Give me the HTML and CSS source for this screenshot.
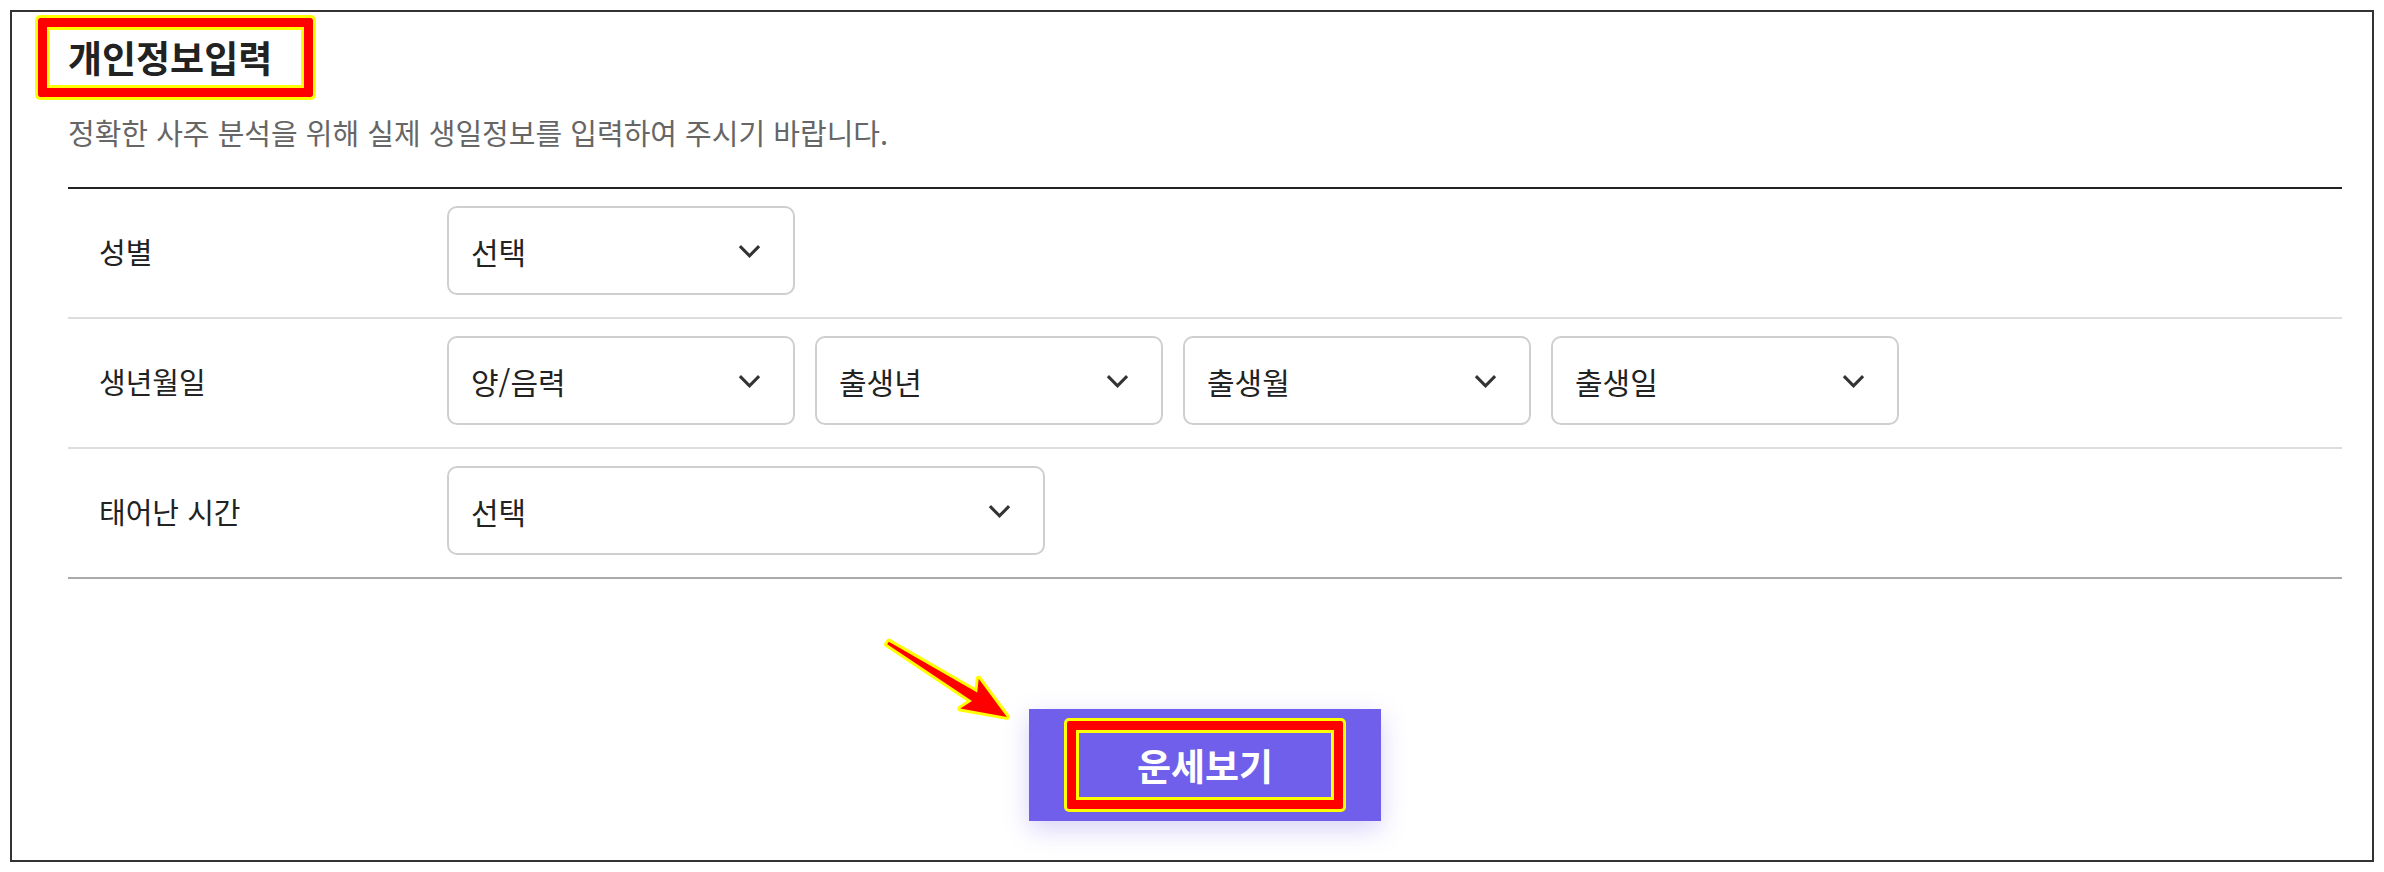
FILE: index.html
```html
<!DOCTYPE html>
<html lang="ko">
<head>
<meta charset="utf-8">
<title>개인정보입력</title>
<link rel="stylesheet" href="styles.css">
</head>
<body>
<div class="card">
  <header class="intro">
    <h1 class="title">개인정보입력</h1>
    <p class="desc">정확한 사주 분석을 위해 실제 생일정보를 입력하여 주시기 바랍니다.</p>
  </header>

  <div class="form">
    <div class="row">
      <div class="label">성별</div>
      <div class="fields">
        <div class="select"><span>선택</span><svg class="chev" viewBox="0 0 24 14"><path d="M2 2 L12 12 L22 2"/></svg></div>
      </div>
    </div>
    <div class="row">
      <div class="label">생년월일</div>
      <div class="fields">
        <div class="select"><span>양/음력</span><svg class="chev" viewBox="0 0 24 14"><path d="M2 2 L12 12 L22 2"/></svg></div>
        <div class="select"><span>출생년</span><svg class="chev" viewBox="0 0 24 14"><path d="M2 2 L12 12 L22 2"/></svg></div>
        <div class="select"><span>출생월</span><svg class="chev" viewBox="0 0 24 14"><path d="M2 2 L12 12 L22 2"/></svg></div>
        <div class="select"><span>출생일</span><svg class="chev" viewBox="0 0 24 14"><path d="M2 2 L12 12 L22 2"/></svg></div>
      </div>
    </div>
    <div class="row last">
      <div class="label">태어난 시간</div>
      <div class="fields">
        <div class="select wide"><span>선택</span><svg class="chev" viewBox="0 0 24 14"><path d="M2 2 L12 12 L22 2"/></svg></div>
      </div>
    </div>
  </div>

  <div class="actions">
    <button class="submit" type="button"><span class="mark">운세보기</span></button>
  </div>

  <svg class="arrow" viewBox="0 0 145 100" width="145" height="100">
    <polygon points="13.8,11.7 102.2,62.6 103.7,48.8 131.9,86.9 85.3,78.6 97.0,71.1 12.2,14.3"
      fill="#ff0000" stroke="#ffff00" stroke-width="6" stroke-linejoin="round" paint-order="stroke"/>
  </svg>
</div>
</body>
</html>
```

FILE: styles.css
```css
* {
  box-sizing: border-box;
}

html, body {
  margin: 0;
  padding: 0;
  background: #ffffff;
}

body {
  font-family: "Noto Sans CJK KR", "Noto Sans", sans-serif;
  color: #222222;
}

.card {
  position: relative;
  margin: 10px;
  height: 852px;
  border: 2px solid #333333;
  padding: 0 30px 0 56px;
  background: #ffffff;
}

.intro {
  display: flex;
  flex-direction: column;
  align-items: flex-start;
}

.title {
  margin: 6px 0 0 -30px;
  width: 275px;
  height: 79px;
  display: flex;
  align-items: center;
  padding-left: 21px;
  border: 9px solid #ff0000;
  border-radius: 2px;
  outline: 3px solid #ffff00;
  box-shadow: inset 0 0 0 3px #ffff00;
  font-size: 37px;
  font-weight: 700;
  color: #222222;
  line-height: 1;
  white-space: nowrap;
}

.desc {
  margin: 15px 0 0;
  font-size: 29px;
  line-height: 40px;
  color: #666666;
}

.form {
  margin-top: 35px;
  border-top: 2px solid #222222;
}

.row {
  display: flex;
  align-items: center;
  padding: 17px 0 22px;
  border-bottom: 2px solid #dddddd;
}

.row.last {
  border-bottom-color: #aaaaaa;
}

.label {
  flex: 0 0 379px;
  padding-left: 31px;
  font-size: 29px;
  color: #222222;
}

.fields {
  display: flex;
  gap: 20px;
}

.select {
  width: 348px;
  height: 89px;
  display: flex;
  align-items: center;
  justify-content: space-between;
  padding: 0 32px 0 22px;
  border: 2px solid #cfcfcf;
  border-radius: 10px;
  font-size: 30px;
  color: #222222;
}

.select.wide {
  width: 598px;
}

.chev {
  width: 23px;
  height: 14px;
  fill: none;
  stroke: #333333;
  stroke-width: 3.2;
  stroke-linecap: butt;
  stroke-linejoin: miter;
}

.actions {
  margin-top: 130px;
  display: flex;
  justify-content: center;
}

.submit {
  width: 352px;
  height: 112px;
  display: flex;
  align-items: center;
  justify-content: center;
  border: none;
  padding: 0;
  background: #6f5fea;
  box-shadow: 0 8px 24px rgba(111, 95, 234, 0.28);
  font-family: inherit;
  cursor: pointer;
}

.mark {
  width: 276px;
  height: 88px;
  display: flex;
  align-items: center;
  justify-content: center;
  border: 9px solid #ff0000;
  border-radius: 2px;
  outline: 3px solid #ffff00;
  box-shadow: inset 0 0 0 3px #ffff00;
  font-size: 37px;
  font-weight: 700;
  color: #ffffff;
  line-height: 1;
}

.arrow {
  position: absolute;
  left: 863px;
  top: 618px;
  overflow: visible;
}
```
